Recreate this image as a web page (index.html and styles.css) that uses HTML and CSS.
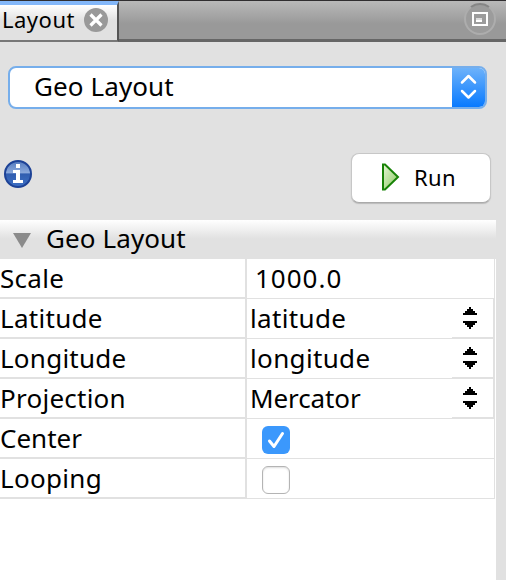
FILE: index.html
```html
<!DOCTYPE html>
<html lang="en">
<head>
<meta charset="utf-8">
<title>Layout</title>
<link rel="stylesheet" href="styles.css">
</head>
<body>
<header class="tabbar">
  <div class="tab"><span class="tab-label">Layout</span>
    <svg class="close" width="24" height="24" viewBox="0 0 24 24"><circle cx="12" cy="12" r="12" fill="#999"/><path d="M6.5 6.5l11 11M17.5 6.5l-11 11" stroke="#fff" stroke-width="3.2"/></svg>
  </div>
  <svg class="minimize" width="32" height="32" viewBox="0 0 32 32"><circle cx="16" cy="16" r="15" fill="#9c9c9c" stroke="#adadad" stroke-width="2"/><path d="M7 4A15 15 0 0 1 25 4" fill="none" stroke="#858585" stroke-width="2"/><rect x="9" y="10" width="14" height="12" fill="none" stroke="#fff" stroke-width="2"/><path d="M12 15h6v4h-6z" fill="#fff"/><path d="M12 15h6v2h-6z" fill="#ddd"/></svg>
</header>
<div class="select"><span class="select-label">Geo Layout</span>
  <span class="select-button"><svg width="34" height="42" viewBox="0 0 34 42"><path d="M10 17.5l6.5-6.5 6.5 6.5M10 26l6.5 6.5L23 26" fill="none" stroke="#fff" stroke-width="2.5" stroke-linecap="round" stroke-linejoin="round"/></svg></span>
</div>
<div class="actions">
  <svg class="info" width="30" height="30" viewBox="0 0 30 30"><defs><linearGradient id="blue" x2="0" y2="1"><stop offset="0" stop-color="#5279bd"/><stop offset=".45" stop-color="#8ba9dc"/><stop offset=".5" stop-color="#315eb0"/><stop offset="1" stop-color="#3d70c4"/></linearGradient></defs><circle cx="15" cy="15" r="13" fill="url(#blue)" stroke="#1d4296" stroke-width="2"/><path d="M13 5h4v4h-4zM10 11h7v10h3v3H10v-3h3v-7h-3z" fill="#fff"/></svg>
  <button class="run"><svg width="18" height="28" viewBox="0 0 18 28"><defs><linearGradient id="green" x2="1" y2="1"><stop offset="0" stop-color="#e5f6d5"/><stop offset="1" stop-color="#8bca61"/></linearGradient></defs><path d="M1 1.5h2L16 14 3 26.5H1z" fill="url(#green)" stroke="#188307" stroke-width="2"/></svg><span>Run</span></button>
</div>
<main class="panel">
  <div class="section"><svg class="disclosure" width="18" height="15" viewBox="0 0 18 15"><path d="M0 0h18L9 15z" fill="#8b8b8b"/></svg><span class="geo">Geo Layout</span></div>
  <div class="row"><div class="name"><span class="scale">Scale</span></div><div class="value number"><span class="amount">1000.0</span></div></div>
  <div class="row"><div class="name"><span class="latitude">Latitude</span></div><div class="value choice"><span class="latitude-value">latitude</span><span class="stepper"><svg width="14" height="22" viewBox="0 0 14 22" shape-rendering="crispEdges"><path d="M0 8V6h2V4h2V2h2V0h2v2h2v2h2v2h2v2zM0 14h14v2h-2v2h-2v2H8v2H6v-2H4v-2H2v-2H0z"/></svg></span></div></div>
  <div class="row"><div class="name"><span class="longitude">Longitude</span></div><div class="value choice"><span class="longitude-value">longitude</span><span class="stepper"><svg width="14" height="22" viewBox="0 0 14 22" shape-rendering="crispEdges"><path d="M0 8V6h2V4h2V2h2V0h2v2h2v2h2v2h2v2zM0 14h14v2h-2v2h-2v2H8v2H6v-2H4v-2H2v-2H0z"/></svg></span></div></div>
  <div class="row"><div class="name"><span class="projection">Projection</span></div><div class="value choice"><span class="mercator">Mercator</span><span class="stepper"><svg width="14" height="22" viewBox="0 0 14 22" shape-rendering="crispEdges"><path d="M0 8V6h2V4h2V2h2V0h2v2h2v2h2v2h2v2zM0 14h14v2h-2v2h-2v2H8v2H6v-2H4v-2H2v-2H0z"/></svg></span></div></div>
  <div class="row"><div class="name"><span class="center">Center</span></div><div class="value check"><span class="box checked"><svg width="28" height="28" viewBox="0 0 28 28"><path d="M7.5 15l4.5 5.5L20.5 7.5" fill="none" stroke="#fff" stroke-width="3" stroke-linecap="round" stroke-linejoin="round"/></svg></span></div></div>
  <div class="row"><div class="name"><span class="looping">Looping</span></div><div class="value check"><span class="box"></span></div></div>
</main>
</body>
</html>
```
FILE: styles.css
```css
* { box-sizing: border-box; }
body {
  margin: 0;
  width: 506px;
  height: 580px;
  overflow: hidden;
  background: #e1e1e1;
  color: #000;
  font: 26px/38px "Lucida Grande", "Noto Sans", sans-serif;
}
svg { display: block; flex: none; }
span { white-space: nowrap; }
.tabbar {
  height: 42px;
  display: flex;
  justify-content: space-between;
  border-top: 1px solid #302e30;
  border-bottom: 3px solid #666;
  background: linear-gradient(#b9b9b9, #999 60%, #999);
}
.tab {
  display: flex;
  width: 119px;
  height: 41px;
  padding-left: 2px;
  border-top: 4px solid #83b7f9;
  border-right: 2px solid #555;
  border-bottom: 2px solid #777;
  background: linear-gradient(#fff, #e1e1e1 45%);
  font-size: 22px;
  line-height: 28px;
}
.tab-label { width: 82px; letter-spacing: 0.5px; }
.close { margin-top: 3px; }
.minimize { margin: 2px 10px 0 0; }
.select {
  display: flex;
  justify-content: space-between;
  width: 479px;
  height: 43px;
  margin: 24px 0 0 8px;
  border: 2px solid #76aeeb;
  border-radius: 8px;
  background: #fff;
  overflow: hidden;
}
.select-label { padding-left: 24px; letter-spacing: 0.1px; line-height: 36px; }
.select-button { width: 33px; background: linear-gradient(#6db2fa, #087aff); }
.select-button svg { margin-top: -3px; }
.actions {
  display: flex;
  justify-content: space-between;
  height: 67px;
  margin-top: 44px;
  padding-right: 15px;
}
.info { margin: 6px 0 0 3px; }
.run {
  display: flex;
  width: 140px;
  height: 50px;
  padding: 9px 0 0 30px;
  border: 1px solid #c7c7c7;
  border-bottom-color: #aaa;
  border-radius: 8px;
  background: #fff;
  box-shadow: 0 1px 1px #bbb;
  color: #000;
  font: 22px/28px "Lucida Grande", "Noto Sans", sans-serif;
}
.run span { margin-left: 14px; letter-spacing: 0.3px; }
.panel { width: 496px; height: 360px; background: #fff; }
.section {
  display: flex;
  height: 39px;
  padding-left: 13px;
  background: linear-gradient(#fff, #e1e1e1 48%);
  line-height: 36px;
}
.disclosure { margin: 13px 15px 0 0; }
.geo { letter-spacing: 0.1px; }
.row { display: flex; width: 495px; height: 40px; }
.name {
  width: 247px;
  border-right: 2px solid #e1e1e1;
  border-bottom: 2px solid #e1e1e1;
}
.scale, .latitude, .looping { letter-spacing: 0.3px; }
.longitude, .projection { letter-spacing: 0.25px; }
.latitude-value, .longitude-value { letter-spacing: 0.35px; }
.amount { letter-spacing: 1px; }
.mercator { letter-spacing: -0.1px; }
.value {
  display: flex;
  justify-content: space-between;
  width: 248px;
  padding: 0 0 0 3px;
  border-right: 1px solid #e1e1e1;
  border-bottom: 1px solid #e1e1e1;
}
.choice { border-right-width: 2px; }
.number { padding-left: 8px; }
.stepper {
  width: 41px;
  padding: 8px 0 0 11px;
  border-bottom: 1px solid #e1e1e1;
}
.check { padding-left: 15px; }
.box {
  width: 28px;
  height: 28px;
  margin-top: 7px;
  border: 1px solid #b4b4b4;
  border-radius: 6px;
  box-shadow: inset 0 1px 2px #ddd;
}
.checked { border: 0; background: #3b98fc; box-shadow: none; }
```
